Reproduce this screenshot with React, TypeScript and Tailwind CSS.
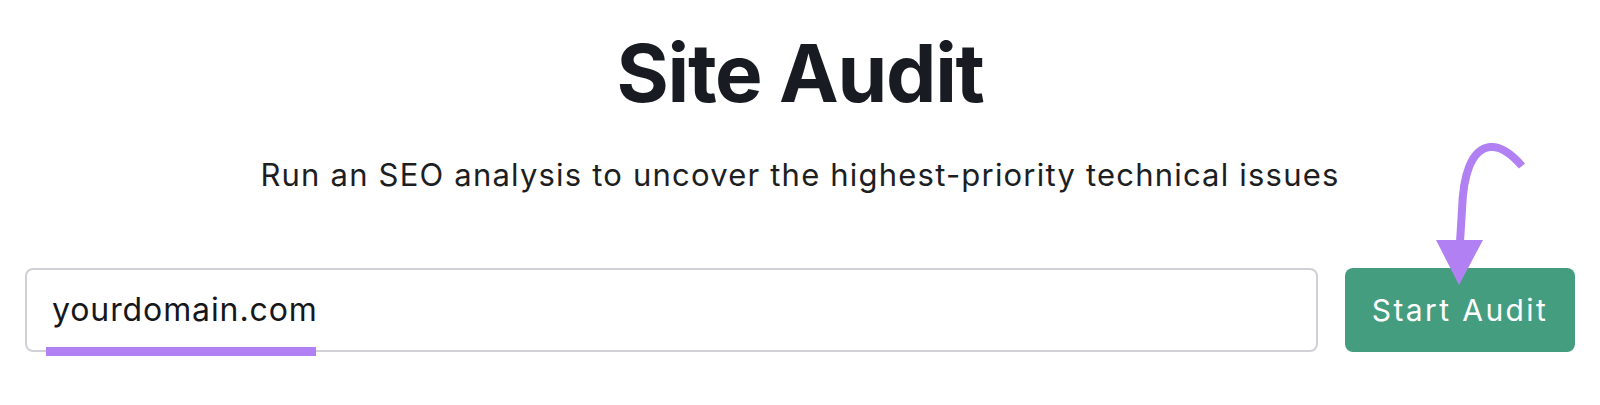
import React from "react";

export default function App() {
  return (
    <div
      className="relative w-[1600px] h-[405px] bg-white overflow-hidden"
      style={{ fontFamily: "Inter, 'Noto Sans', sans-serif" }}
    >
      <div className="flex flex-col items-center pt-[33px]">
        <h1 className="text-[80px] leading-[80px] font-bold text-[#191b23] tracking-[-1.3px]">
          Site Audit
        </h1>
        <p className="mt-[43px] text-[31px] leading-[38px] text-[#1d1e22] tracking-[1.2px]">
          Run an SEO analysis to uncover the highest-priority technical issues
        </p>
      </div>
      <div className="flex items-center gap-[27px] px-[25px] mt-[74px]">
        <div className="relative flex-1 h-[84px] rounded-[8px] border-[2px] border-[#cfd1d6] bg-white flex items-center pl-[25px]">
          <span className="text-[32px] text-[#16171b] tracking-[0.9px]">yourdomain.com</span>
          <div className="absolute left-[19px] bottom-[-6px] w-[270px] h-[9px] bg-[#b181f4]" />
        </div>
        <button className="w-[230px] h-[84px] rounded-[8px] bg-[#459d80] text-white text-[30px] tracking-[2.4px]">
          Start Audit
        </button>
      </div>
      <svg
        className="absolute left-0 top-0 pointer-events-none"
        width="1600"
        height="405"
        viewBox="0 0 1600 405"
      >
        <path
          d="M1522 166 C1510 152 1500 146 1490 147 C1471 149 1463 176 1462 210 L1460 242"
          fill="none"
          stroke="#b181f4"
          strokeWidth="8"
        />
        <polygon points="1436,240 1483,240 1459,285" fill="#b181f4" />
      </svg>
    </div>
  );
}
